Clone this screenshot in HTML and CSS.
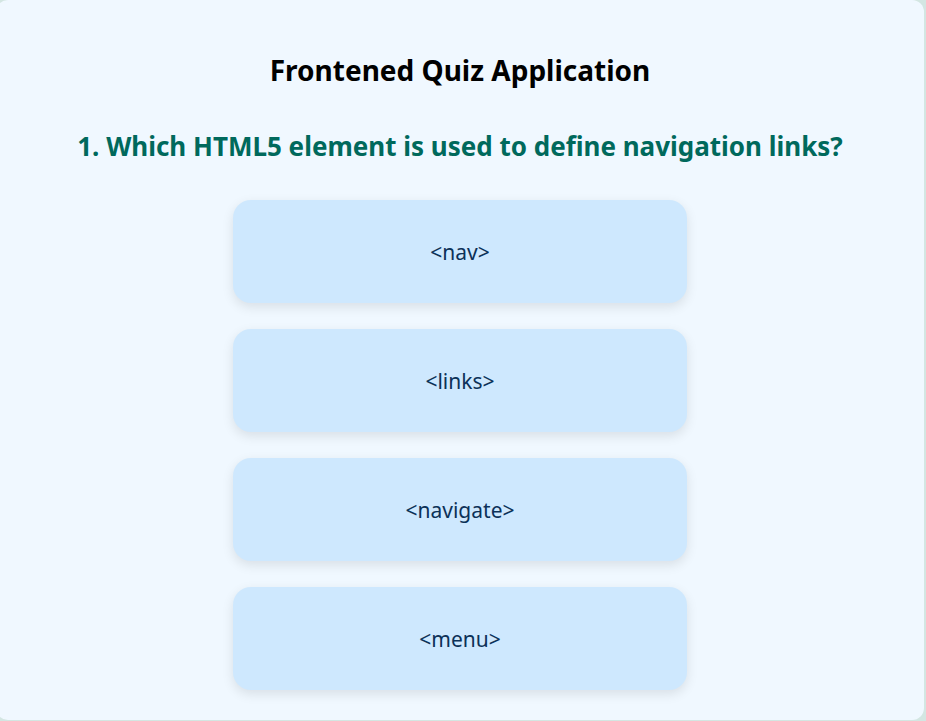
FILE: index.html
```html
<!DOCTYPE html>
<html lang="en">
<head>
<meta charset="utf-8">
<title>Frontened Quiz Application</title>
<link rel="stylesheet" href="styles.css">
</head>
<body>
<main class="quiz">
  <h1 class="quiz-title">Frontened Quiz Application</h1>
  <h2 class="question">1. Which HTML5 element is used to define navigation links?</h2>
  <div class="options">
    <button class="option">&lt;nav&gt;</button>
    <button class="option">&lt;links&gt;</button>
    <button class="option">&lt;navigate&gt;</button>
    <button class="option">&lt;menu&gt;</button>
  </div>
</main>
</body>
</html>
```
FILE: styles.css
```css
html, body {
  margin: 0;
  padding: 0;
}
body {
  background: #d3e6e2;
  font-family: "Noto Sans", "Open Sans", sans-serif;
  min-height: 721px;
}
.quiz {
  box-sizing: border-box;
  width: 928px;
  margin-left: -4px;
  height: 720px;
  background: #f0f8ff;
  border-radius: 12px;
  padding: 50px 20px 0;
  display: flex;
  flex-direction: column;
  align-items: center;
}
.quiz-title {
  margin: 0;
  font-size: 28px;
  font-weight: 700;
  color: #000;
  line-height: 40px;
}
.question {
  margin: 36px 0 0;
  font-size: 26px;
  font-weight: 700;
  color: #00695c;
  line-height: 40px;
}
.options {
  margin-top: 34px;
  display: flex;
  flex-direction: column;
  gap: 26px;
}
.option {
  width: 454px;
  height: 103px;
  border: none;
  border-radius: 18px;
  background: #cee8fe;
  color: #0c3158;
  font-family: inherit;
  font-size: 21px;
  box-shadow: 0 4px 12px rgba(0, 0, 0, 0.1);
  cursor: pointer;
}
```
